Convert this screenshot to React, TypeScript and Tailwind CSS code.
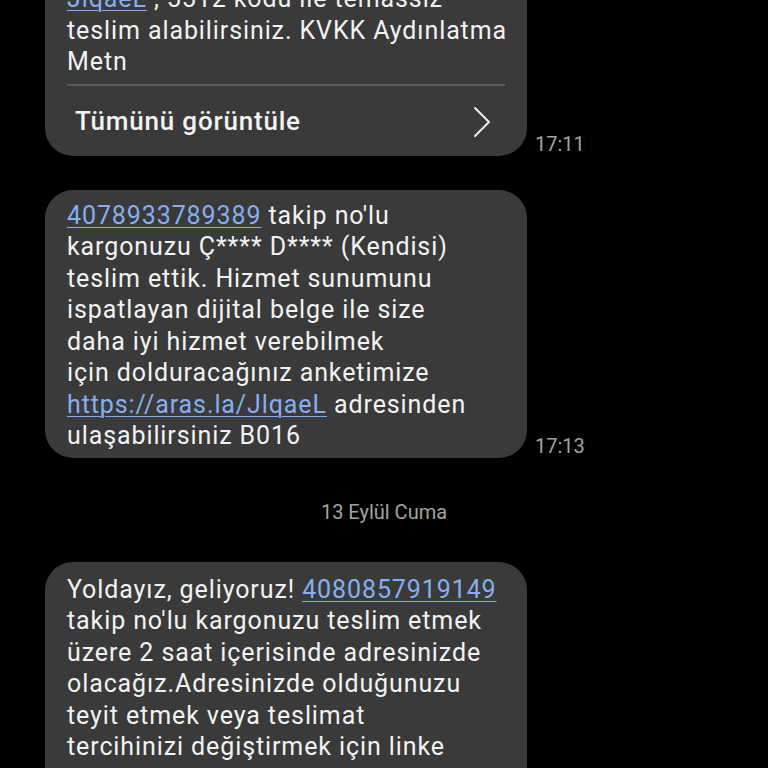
import React from "react";

const Link = ({ children }: { children: React.ReactNode }) => (
  <span className="text-[#86aef0] underline decoration-1 underline-offset-[3px]">{children}</span>
);

const Time = ({ t }: { t: string }) => (
  <div className="ml-[8px] mb-0 text-[20px] leading-[24px] text-[#a3a3a3] shrink-0">{t}</div>
);

export default function App() {
  return (
    <div
      className="w-[768px] h-[768px] bg-black overflow-hidden text-[#f2f2f2]"
      style={{ fontFamily: "Roboto, 'Noto Sans', sans-serif" }}
    >
      <div className="pl-[45px] flex flex-col">
        {/* Bubble 1 */}
        <div className="flex items-end mt-[-26px]">
          <div className="w-[482px] bg-[#3a3a3a] rounded-b-[28px] pt-[9px] px-[22px] text-[25px] leading-[31.5px] tracking-[0.9px] whitespace-nowrap">
            <div>
              <Link>JlqaeL</Link> , 5512 kodu ile temassiz
              <br />
              teslim alabilirsiniz. KVKK Aydınlatma
              <br />
              Metn
            </div>
            <div className="mt-[6px] h-[2px] bg-[#5a5a5a]" />
            <div className="h-[70px] flex items-center justify-between pt-[3px] pl-[8px] pr-[14px]">
              <span className="font-medium text-[26px] tracking-[0.8px]">Tümünü görüntüle</span>
              <svg width="18" height="32" viewBox="0 0 18 32" fill="none">
                <path d="M2 2 L16 16 L2 30" stroke="#ececec" strokeWidth="2" strokeLinecap="round" strokeLinejoin="round" />
              </svg>
            </div>
          </div>
          <Time t="17:11" />
        </div>

        {/* Bubble 2 */}
        <div className="flex items-end mt-[34px]">
          <div className="w-[482px] bg-[#3a3a3a] rounded-[28px] pt-[10px] pb-[6px] px-[22px] text-[25px] leading-[31.5px] tracking-[0.9px] whitespace-nowrap">
            <Link>4078933789389</Link> takip no'lu
            <br />
            kargonuzu Ç**** D**** (Kendisi)
            <br />
            teslim ettik. Hizmet sunumunu
            <br />
            ispatlayan dijital belge ile size
            <br />
            daha iyi hizmet verebilmek
            <br />
            için dolduracağınız anketimize
            <br />
            <Link>https://aras.la/JlqaeL</Link> adresinden
            <br />
            ulaşabilirsiniz B016
          </div>
          <Time t="17:13" />
        </div>

        {/* Date */}
        <div className="mt-[42px] text-center text-[20px] leading-[24px] text-[#a3a3a3] pr-[45px]">
          13 Eylül Cuma
        </div>

        {/* Bubble 3 */}
        <div className="flex items-end mt-[38px]">
          <div className="w-[482px] bg-[#3a3a3a] rounded-t-[28px] pt-[12px] px-[22px] text-[25px] leading-[31.5px] tracking-[0.9px] whitespace-nowrap">
            Yoldayız, geliyoruz! <Link>4080857919149</Link>
            <br />
            takip no'lu kargonuzu teslim etmek
            <br />
            üzere 2 saat içerisinde adresinizde
            <br />
            olacağız.Adresinizde olduğunuzu
            <br />
            teyit etmek veya teslimat
            <br />
            tercihinizi değiştirmek için linke
            <br />
            adresine <Link>https://aras.la/JT6H0</Link>
            <br />
            tıklayabilirsiniz.
          </div>
        </div>
      </div>
    </div>
  );
}
